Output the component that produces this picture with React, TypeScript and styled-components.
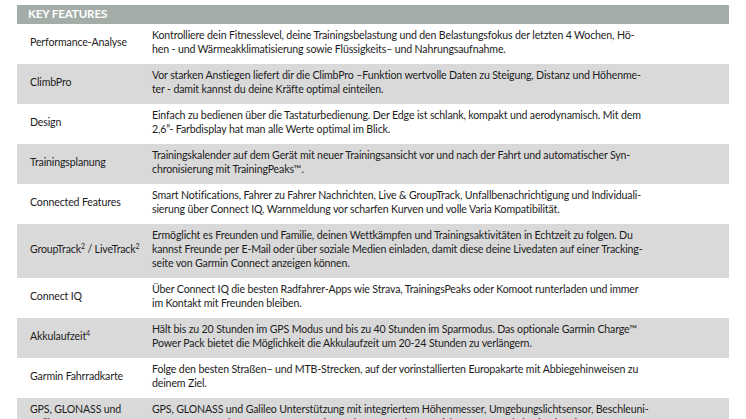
import React from 'react'
import styled, { createGlobalStyle } from 'styled-components'

const GlobalStyle = createGlobalStyle`
  html, body {
    margin: 0;
    padding: 0;
    background: #ffffff;
    overflow: hidden;
  }
  body {
    font-family: Lato, 'Open Sans', sans-serif;
    color: #1c1c1c;
  }
`

const StyledPage = styled.div`
  width: 746px;
  height: 419px;
  padding: 5px 0 0 17px;
  box-sizing: border-box;
  overflow: hidden;
`

const StyledTable = styled.div`
  width: 712px;
  display: flex;
  flex-direction: column;
`

const StyledHeader = styled.div`
  height: 19px;
  background: #a4aca7;
  color: #ffffff;
  font-weight: 700;
  font-size: 11.5px;
  letter-spacing: -0.1px;
  line-height: 18px;
  padding-left: 11px;
`

const StyledRow = styled.div<{ $shaded: boolean }>`
  display: grid;
  grid-template-columns: 135px 1fr;
  align-items: center;
  padding: 4px 0 8px 0;
  background: ${(p) => (p.$shaded ? '#d9d9d9' : '#ffffff')};
  font-size: 10.6px;
  line-height: 14px;
  letter-spacing: -0.15px;
`

const StyledLabel = styled.div`
  padding-left: 13px;
  white-space: nowrap;

  sup {
    font-size: 7px;
    line-height: 0;
    vertical-align: 4px;
  }
`

const StyledDescription = styled.div`
  white-space: nowrap;
`

const StyledLine = styled.div``

type Feature = {
  label: React.ReactNode
  lines: string[]
}

const features: Feature[] = [
  {
    label: 'Performance-Analyse',
    lines: [
      'Kontrolliere dein Fitnesslevel, deine Trainingsbelastung und den Belastungsfokus der letzten 4 Wochen, Hö-',
      'hen - und Wärmeakklimatisierung sowie Flüssigkeits– und Nahrungsaufnahme.',
    ],
  },
  {
    label: 'ClimbPro',
    lines: [
      'Vor starken Anstiegen liefert dir die ClimbPro –Funktion wertvolle Daten zu Steigung, Distanz und Höhenme-',
      'ter - damit kannst du deine Kräfte optimal einteilen.',
    ],
  },
  {
    label: 'Design',
    lines: [
      'Einfach zu bedienen über die Tastaturbedienung. Der Edge ist schlank, kompakt und aerodynamisch. Mit dem',
      '2,6”- Farbdisplay hat man alle Werte optimal im Blick.',
    ],
  },
  {
    label: 'Trainingsplanung',
    lines: [
      'Trainingskalender auf dem Gerät mit neuer Trainingsansicht vor und nach der Fahrt und automatischer Syn-',
      'chronisierung mit TrainingPeaks™.',
    ],
  },
  {
    label: 'Connected Features',
    lines: [
      'Smart Notifications, Fahrer zu Fahrer Nachrichten, Live & GroupTrack, Unfallbenachrichtigung und Individuali-',
      'sierung über Connect IQ, Warnmeldung vor scharfen Kurven und volle Varia Kompatibilität.',
    ],
  },
  {
    label: (
      <>
        GroupTrack<sup>2</sup> / LiveTrack<sup>2</sup>
      </>
    ),
    lines: [
      'Ermöglicht es Freunden und Familie, deinen Wettkämpfen und Trainingsaktivitäten in Echtzeit zu folgen. Du',
      'kannst Freunde per E-Mail oder über soziale Medien einladen, damit diese deine Livedaten auf einer Tracking-',
      'seite von Garmin Connect anzeigen können.',
    ],
  },
  {
    label: 'Connect IQ',
    lines: [
      'Über Connect IQ die besten Radfahrer-Apps wie Strava, TrainingsPeaks oder Komoot runterladen und immer',
      'im Kontakt mit Freunden bleiben.',
    ],
  },
  {
    label: (
      <>
        Akkulaufzeit<sup>4</sup>
      </>
    ),
    lines: [
      'Hält bis zu 20 Stunden im GPS Modus und bis zu 40 Stunden im Sparmodus. Das optionale Garmin Charge™',
      'Power Pack bietet die Möglichkeit die Akkulaufzeit um 20-24 Stunden zu verlängern.',
    ],
  },
  {
    label: 'Garmin Fahrradkarte',
    lines: [
      'Folge den besten Straßen– und MTB-Strecken, auf der vorinstallierten Europakarte mit Abbiegehinweisen zu',
      'deinem Ziel.',
    ],
  },
  {
    label: (
      <>
        GPS, GLONASS und
        <br />
        Galileo
      </>
    ),
    lines: [
      'GPS, GLONASS und Galileo Unterstützung mit integriertem Höhenmesser, Umgebungslichtsensor, Beschleuni-',
      'gungsmesser und Magnetometer für eine verbesserte Fahrtaufzeichnung auf und abseits der Piste.',
    ],
  },
]

export default function App() {
  return (
    <>
      <GlobalStyle />
      <StyledPage>
        <StyledTable>
          <StyledHeader>KEY FEATURES</StyledHeader>
          {features.map((feature, i) => (
            <StyledRow key={i} $shaded={i % 2 === 1}>
              <StyledLabel>{feature.label}</StyledLabel>
              <StyledDescription>
                {feature.lines.map((line, j) => (
                  <StyledLine key={j}>{line}</StyledLine>
                ))}
              </StyledDescription>
            </StyledRow>
          ))}
        </StyledTable>
      </StyledPage>
    </>
  )
}
